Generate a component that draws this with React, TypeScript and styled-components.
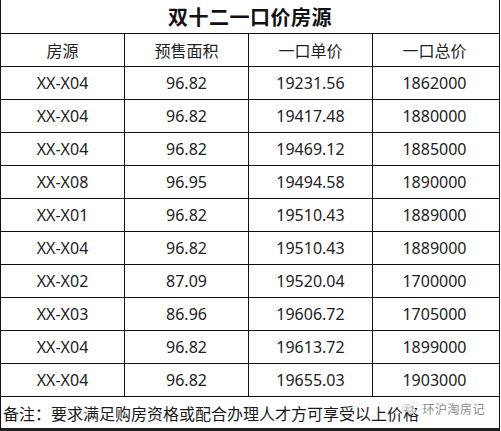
import * as React from "react";
import styled, { createGlobalStyle } from "styled-components";

const GlobalStyle = createGlobalStyle`
	html, body {
		margin: 0;
		padding: 0;
		background: #ffffff;
	}
	* {
		box-sizing: border-box;
	}
`;

const rows = [
	["XX-X04", "96.82", "19231.56", "1862000"],
	["XX-X04", "96.82", "19417.48", "1880000"],
	["XX-X04", "96.82", "19469.12", "1885000"],
	["XX-X08", "96.95", "19494.58", "1890000"],
	["XX-X01", "96.82", "19510.43", "1889000"],
	["XX-X04", "96.82", "19510.43", "1889000"],
	["XX-X02", "87.09", "19520.04", "1700000"],
	["XX-X03", "86.96", "19606.72", "1705000"],
	["XX-X04", "96.82", "19613.72", "1899000"],
	["XX-X04", "96.82", "19655.03", "1903000"],
];

const headers = ["房源", "预售面积", "一口单价", "一口总价"];

const StyledTable = styled.div`
	position: relative;
	width: 500px;
	height: 431px;
	border-left: 1px solid #111;
	border-right: 1px solid #111;
	font-family: "Noto Sans", "Noto Sans CJK SC", sans-serif;
	color: #222;
	display: flex;
	flex-direction: column;
`;

const TitleRow = styled.div`
	height: 34px;
	border-bottom: 1px solid #111;
	display: flex;
	align-items: center;
	justify-content: center;
	font-family: "Noto Sans CJK SC", sans-serif;
	font-weight: 700;
	font-size: 20px;
	color: #111;
	letter-spacing: 0.5px;
`;

const Row = styled.div`
	height: 33px;
	border-bottom: 1px solid #111;
	display: flex;
`;

const Cell = styled.div<{ $w: number; $cjk?: boolean }>`
	width: ${({ $w }) => $w}px;
	border-right: 1px solid #111;
	display: flex;
	align-items: center;
	justify-content: center;
	font-size: 16px;
	font-family: ${({ $cjk }) =>
		$cjk ? `"Noto Sans CJK SC", sans-serif` : `"Noto Sans", sans-serif`};
	&:last-child {
		border-right: none;
	}
`;

const Footer = styled.div`
	flex: 1;
	display: flex;
	align-items: center;
	padding-left: 2px;
	font-family: "Noto Sans CJK SC", sans-serif;
	font-size: 16px;
	color: #1a1a1a;
	border-bottom: 3px solid #222;
`;

const Watermark = styled.div`
	position: absolute;
	right: 14px;
	bottom: 14px;
	display: flex;
	align-items: center;
	gap: 6px;
	font-family: "Noto Sans CJK SC", sans-serif;
	font-size: 12px;
	color: #8a8a8a;
	span {
		letter-spacing: 0.5px;
	}
`;

const WechatMark = () => (
	<svg width="14" height="12" viewBox="0 0 14 12" fill="none">
		<ellipse cx="5" cy="5" rx="4.5" ry="3.8" stroke="#c8c8c8" strokeWidth="1" fill="rgba(255,255,255,0.6)" />
		<ellipse cx="9.5" cy="7.5" rx="3.8" ry="3.2" stroke="#c8c8c8" strokeWidth="1" fill="rgba(255,255,255,0.6)" />
		<circle cx="3.5" cy="4" r="0.6" fill="#bbb" />
		<circle cx="6.5" cy="4" r="0.6" fill="#bbb" />
	</svg>
);

const widths = [124, 124, 124, 123];

const App = () => {
	return (
		<>
			<GlobalStyle />
			<StyledTable>
				<TitleRow>双十二一口价房源</TitleRow>
				<Row>
					{headers.map((h, i) => (
						<Cell key={h} $w={widths[i]} $cjk>
							{h}
						</Cell>
					))}
				</Row>
				{rows.map((r, ri) => (
					<Row key={ri}>
						{r.map((v, i) => (
							<Cell key={i} $w={widths[i]}>
								{v}
							</Cell>
						))}
					</Row>
				))}
				<Footer>备注：要求满足购房资格或配合办理人才方可享受以上价格</Footer>
				<Watermark>
					<WechatMark />
					<span>环沪淘房记</span>
				</Watermark>
			</StyledTable>
		</>
	);
};

export default App;
